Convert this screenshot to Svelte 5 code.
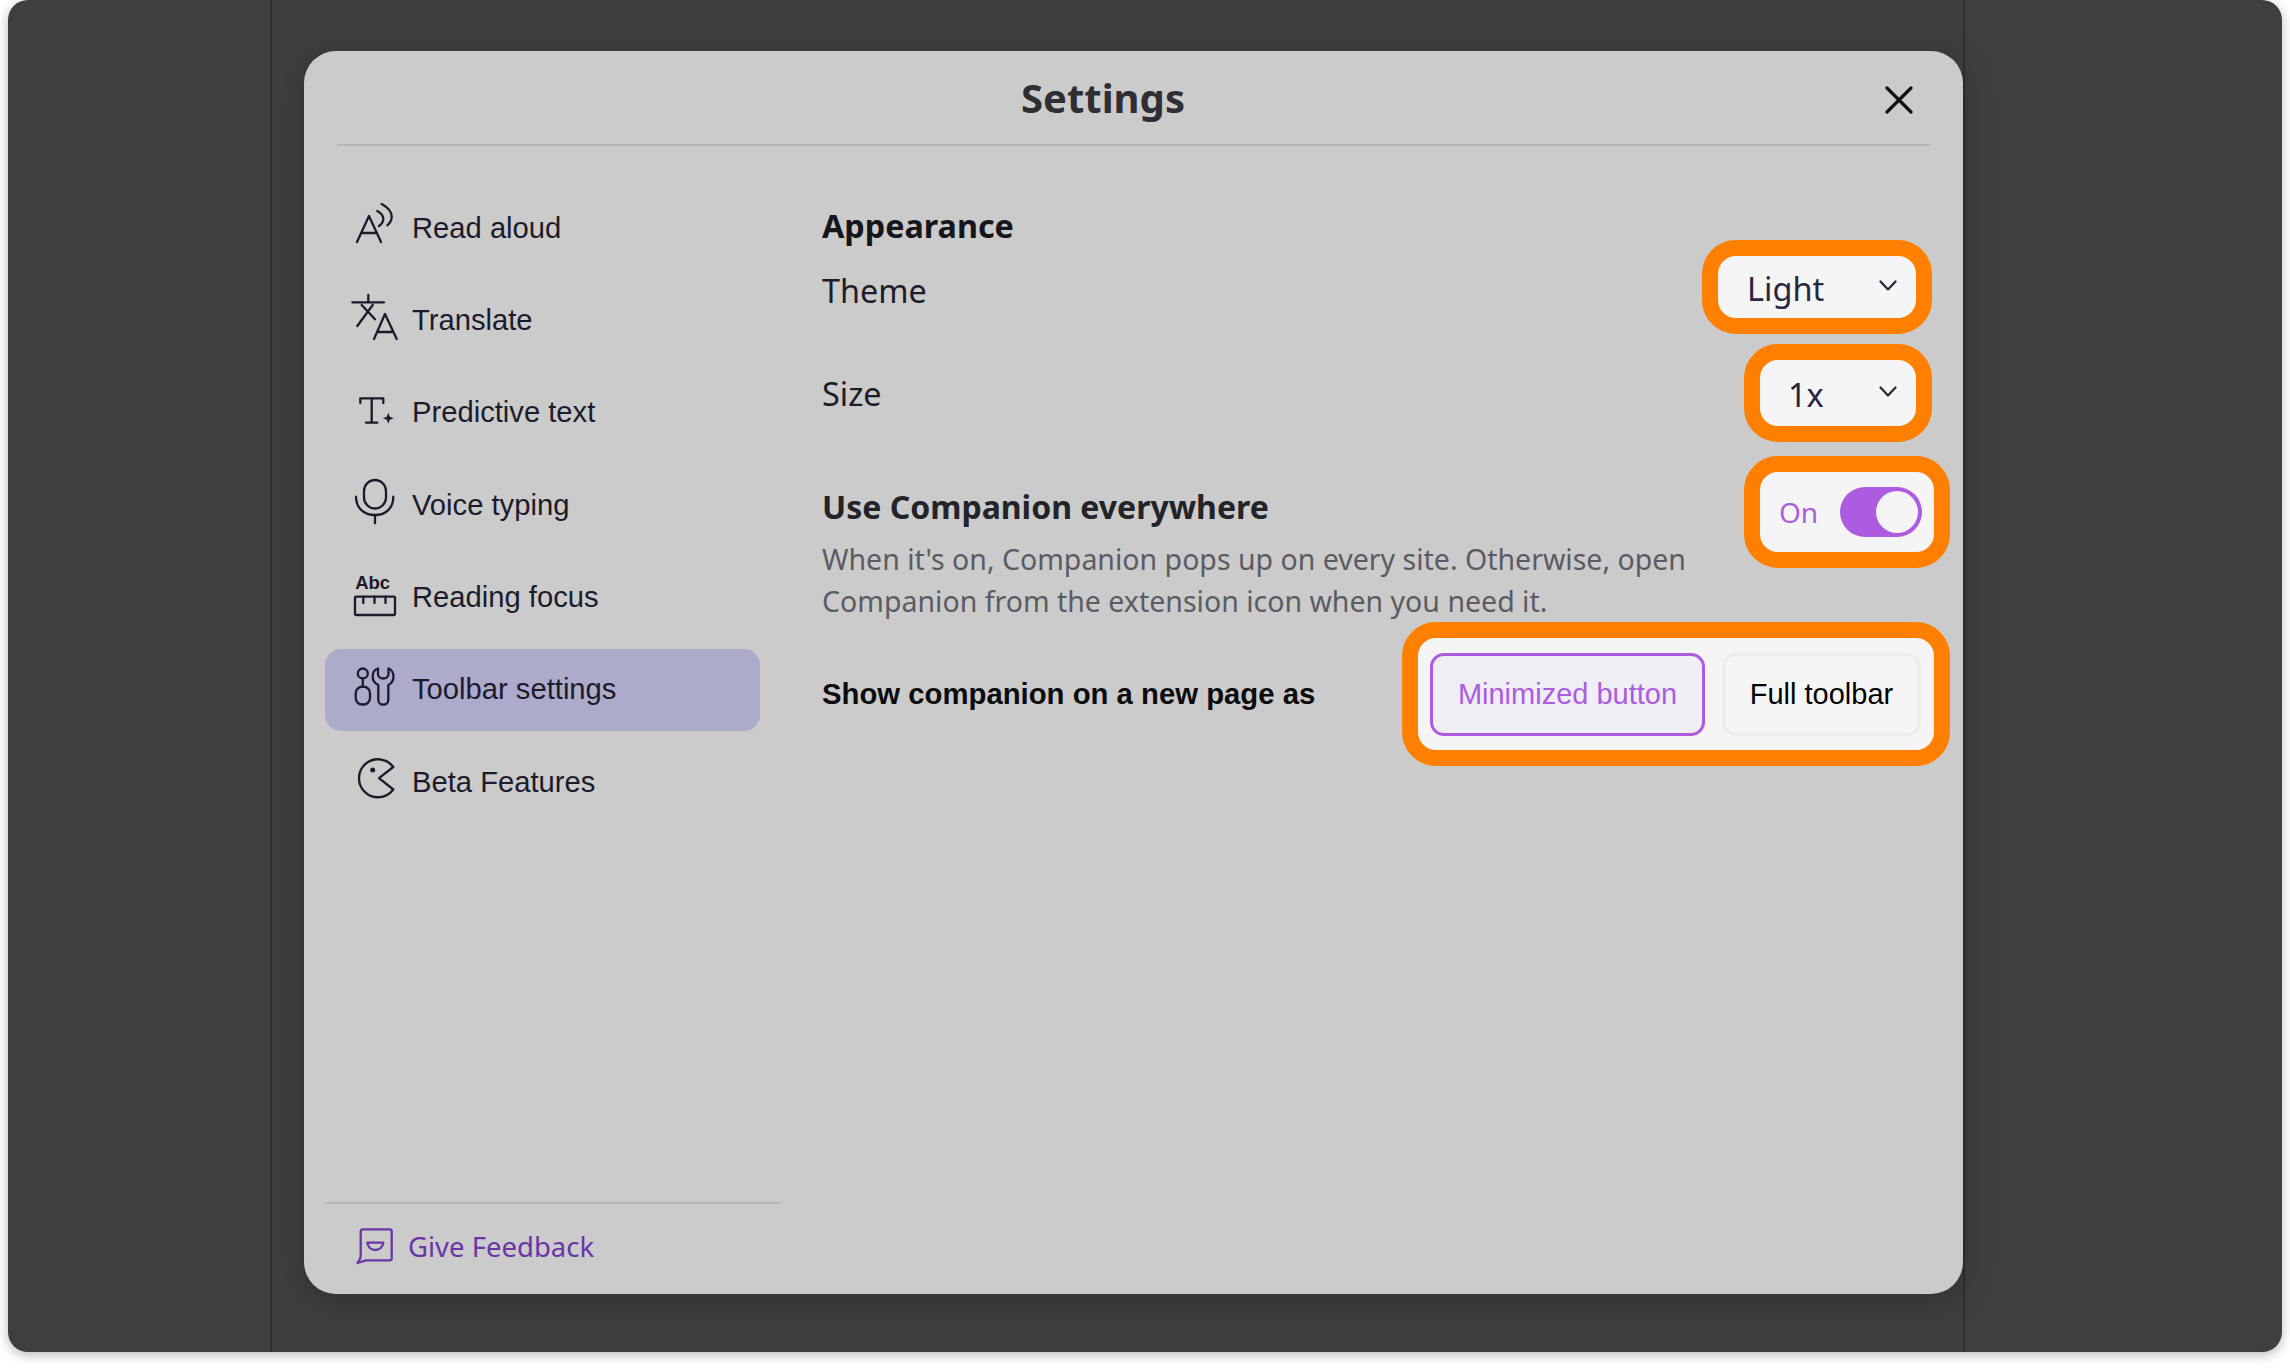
<script>
  const items = [
    { id: 'read', label: 'Read aloud' },
    { id: 'translate', label: 'Translate' },
    { id: 'predict', label: 'Predictive text' },
    { id: 'voice', label: 'Voice typing' },
    { id: 'focus', label: 'Reading focus' },
    { id: 'toolbar', label: 'Toolbar settings', active: true },
    { id: 'beta', label: 'Beta Features' }
  ];
</script>

<div class="page">
  <div class="window">
    <div class="panel">
      <div class="modal">
        <header class="head">
          <h1>Settings</h1>
          <svg class="close" width="28" height="28" viewBox="0 0 28 28"><path d="M2 2 L26 26 M26 2 L2 26" /></svg>
        </header>
        <div class="body">
          <aside class="side">
            <nav class="nav">
              {#each items as it}
                <div class="item" class:active={it.active}>
                  <svg class="ico" width="48" height="48" viewBox="0 0 48 48">
                    {#if it.id === 'read'}
                      <path d="M6 38 L18 12 L30 38 M10 29 H26" />
                      <path d="M26.3 7 C30.5 9.5 32.3 12 32.3 14.5 C32.3 17 31 20 28 22" />
                      <path d="M30.7 0 C37 3.5 40.7 8 40.7 12.7 C40.7 16 39 19 36.3 21.3" />
                    {:else if it.id === 'translate'}
                      <path d="M1.3 6.3 H33 M17.3 -1 V6.3 M6.3 30 L21.7 9 M10.7 9 L24 23.3" />
                      <path d="M23 43 L34 18 L45.7 43 M27 36 H41.5" />
                    {:else if it.id === 'predict'}
                      <path d="M9.3 14 V9.3 H32.3 V14 M20.7 9.3 V33.7 M15 33.7 H26.3" />
                      <path class="fill" d="M37.3 23.8 L38.8 27.8 L42.8 29.3 L38.8 30.8 L37.3 34.8 L35.8 30.8 L31.8 29.3 L35.8 27.8 Z" />
                    {:else if it.id === 'voice'}
                      <rect x="13" y="-1" width="22" height="28.5" rx="11" />
                      <path d="M5 15.7 C5 27 13 34 24 34 C35 34 42.3 27 42.3 15.7 M24 34 V42.3" />
                    {:else if it.id === 'focus'}
                      <text x="4.2" y="15.5">Abc</text>
                      <rect x="4" y="23.7" width="40" height="18.3" rx="1" />
                      <path d="M12.3 23.7 V30 M23.5 23.7 V30 M34.5 23.7 V30" />
                    {:else if it.id === 'toolbar'}
                      <circle cx="11.8" cy="7.5" r="5" />
                      <path d="M11.8 12.5 V20.7" />
                      <rect x="4.7" y="20.7" width="14.3" height="17.8" rx="6.5" />
                      <path d="M27 2.5 C23.5 3.5 21.7 7 21.7 10.5 C21.7 14.5 24 17.5 27.3 19 L27.3 34 C27.3 37 29.5 38.7 32.3 38.7 C35 38.7 37.3 37 37.3 34 L37.3 19 C40.5 17.5 42.5 14.5 42.5 10.5 C42.5 7 40.5 3.5 37.5 2.5 L37.5 8 C37.5 11 35 12.5 32.3 12.5 C29.5 12.5 27 11 27 8 Z" />
                    {:else}
                      <path d="M42.3 9 A19 19 0 1 0 42.3 31.5 L28 20.2 Z" />
                      <circle class="fill" cx="21.7" cy="12" r="2.5" />
                    {/if}
                  </svg>
                  <span>{it.label}</span>
                </div>
              {/each}
            </nav>
            <div class="feedback">
              <svg class="ico fb" width="48" height="48" viewBox="0 0 48 48">
                <path d="M12 7.3 H38.7 a2 2 0 0 1 2 2 V36.3 a2 2 0 0 1 -2 2 H15 L6.5 41 C8 39 9.7 37 9.7 34 V9.6 a2.3 2.3 0 0 1 2.3 -2.3 Z" />
                <path d="M16.3 20.7 H32.3 C31.5 25.5 28 28 24.3 28 C20.5 28 17 25.5 16.3 20.7 Z" />
              </svg>
              <span>Give Feedback</span>
            </div>
          </aside>

          <main class="main">
            <h2>Appearance</h2>
            <div class="row narrow">
              <span class="label theme">Theme</span>
              <div class="mark select light">
                <span>Light</span>
                <svg width="18" height="12" viewBox="0 0 18 12"><path d="M1.5 1.5 L9 9.5 L16.5 1.5" /></svg>
              </div>
            </div>
            <div class="row narrow gap">
              <span class="label">Size</span>
              <div class="mark select small">
                <span>1x</span>
                <svg width="18" height="12" viewBox="0 0 18 12"><path d="M1.5 1.5 L9 9.5 L16.5 1.5" /></svg>
              </div>
            </div>
            <div class="row top gap2">
              <div class="every">
                <h3>Use Companion everywhere</h3>
                <p>When it's on, Companion pops up on every site. Otherwise, open<br />Companion from the extension icon when you need it.</p>
              </div>
              <div class="mark toggle">
                <span class="on">On</span>
                <span class="track"><span class="thumb"></span></span>
              </div>
            </div>
            <div class="row">
              <strong class="show">Show companion on a new page as</strong>
              <div class="mark choices">
                <span class="choice sel">Minimized button</span>
                <span class="choice full">Full toolbar</span>
              </div>
            </div>
          </main>
        </div>
      </div>
    </div>
  </div>
</div>

<style>
  :global(body) { margin: 0; background: #fff; }
  * { box-sizing: border-box; }
  .page { width: 2290px; height: 1368px; padding: 0 8px 16px; font-family: "Noto Sans", sans-serif; }
  .window { height: 100%; border-radius: 20px; background: #3e403f; box-shadow: 0 3px 12px rgba(0,0,0,.28); padding-left: 262px; }
  .panel { width: 1695px; height: 100%; background: #3e3e3e; border-left: 2px solid #2f2f2f; border-right: 2px solid #2f2f2f; padding: 51px 0 0 32px; }
  .modal { width: 1659px; height: 1243px; background: #cbcbcb; border-radius: 32px; box-shadow: 0 6px 36px rgba(0,0,0,.22); display: flex; flex-direction: column; }
  .head { margin: 0 33px; height: 95px; border-bottom: 2px solid #b7b7b7; display: flex; align-items: center; justify-content: space-between; padding: 0 17px 0 684px; flex: none; }
  h1 { margin: 0; font-size: 40px; font-weight: 700; color: #2e2e33; line-height: 48px; }
  .close { margin-top: 5px; }
  .close path { fill: none; stroke: #111; stroke-width: 3.2; stroke-linecap: round; }
  .body { flex: 1; display: flex; min-height: 0; }
  .side { width: 456px; margin-left: 21px; display: flex; flex-direction: column; flex: none; }
  .nav { padding-top: 41px; display: flex; flex-direction: column; gap: 10.35px; }
  .item { height: 82px; width: 435px; border-radius: 16px; padding-left: 26px; display: flex; align-items: center; gap: 13px; font-family: "Liberation Sans", Arial, sans-serif; font-size: 29.2px; color: #1c1b2c; }
  .item.active { background: #adabcc; }
  .ico { overflow: visible; flex: none; }
  .ico path, .ico rect, .ico circle { fill: none; stroke: #1c1b2c; stroke-width: 2.3; stroke-linecap: round; stroke-linejoin: round; }
  .ico .fill { fill: #1c1b2c; stroke: none; }
  .ico text { font-family: "Liberation Sans", Arial, sans-serif; font-weight: 700; font-size: 18.5px; fill: #1c1b2c; }
  .feedback { margin-top: auto; height: 92px; border-top: 2px solid #b7b7b7; padding: 0 0 6px 26px; display: flex; align-items: center; gap: 9px; color: #6b35a8; font-size: 27.5px; }
  .ico.fb path { stroke: #6b35a8; }
  .main { flex: 1; margin-left: 41px; padding: 65px 13px 0 0; min-width: 0; }
  h2 { margin: 0 0 1px; font-size: 32.3px; line-height: 28px; font-weight: 700; color: #15151c; }
  .row { display: flex; align-items: center; justify-content: space-between; }
  .row.top { align-items: flex-start; }
  .row.narrow { padding-right: 18px; }
  .row.gap { margin-top: 10px; }
  .row.gap2 { margin-top: 14px; }
  .label { font-size: 32.4px; color: #1d1d2a; }
  .theme { margin-top: 5px; }
  .mark { background: #f5f5f5; border: 16px solid #ff8000; border-radius: 34px; flex: none; }
  .select { display: flex; align-items: center; justify-content: space-between; padding: 0 19px 0 29px; font-size: 32.5px; color: #29253f; }
  .select svg path { fill: none; stroke: #29253f; stroke-width: 2.2; stroke-linecap: round; stroke-linejoin: round; }
  .select svg { margin-top: -2px; }
  .select span { margin-top: 2px; }
  .light { width: 230px; height: 94px; }
  .small { width: 188px; height: 98px; padding-left: 28px; }
  .toggle { width: 206px; height: 112px; display: flex; align-items: center; justify-content: space-between; padding: 0 12px 0 19px; }
  .on { color: #ae5ce0; font-size: 28px; }
  .track { width: 82px; height: 50px; border-radius: 25px; background: #ad5be0; display: flex; align-items: center; justify-content: flex-end; padding-right: 4px; }
  .thumb { width: 42px; height: 42px; border-radius: 50%; background: #f5f5f5; }
  .every { padding-top: 31px; height: 166px; white-space: nowrap; }
  h3 { margin: 0 0 12px; font-size: 32px; line-height: 40px; font-weight: 700; color: #232328; }
  p { margin: 0; font-size: 28.5px; line-height: 41.5px; color: #5b5b63; }
  .show { font-family: "Liberation Sans", Arial, sans-serif; font-size: 29.3px; font-weight: 700; color: #0c0c0c; }
  .choices { width: 548px; height: 144px; display: flex; align-items: center; padding: 0 13px 0 12px; gap: 17px; font-family: "Liberation Sans", Arial, sans-serif; font-size: 29px; }
  .choice { height: 83px; border-radius: 14px; border: 3px solid #ececec; display: flex; align-items: center; justify-content: center; color: #000; background: #f5f5f5; }
  .sel { width: 275px; background: #eeeef4; border-color: #ad5be0; color: #ad5be0; }
  .full { width: 199px; }
</style>
